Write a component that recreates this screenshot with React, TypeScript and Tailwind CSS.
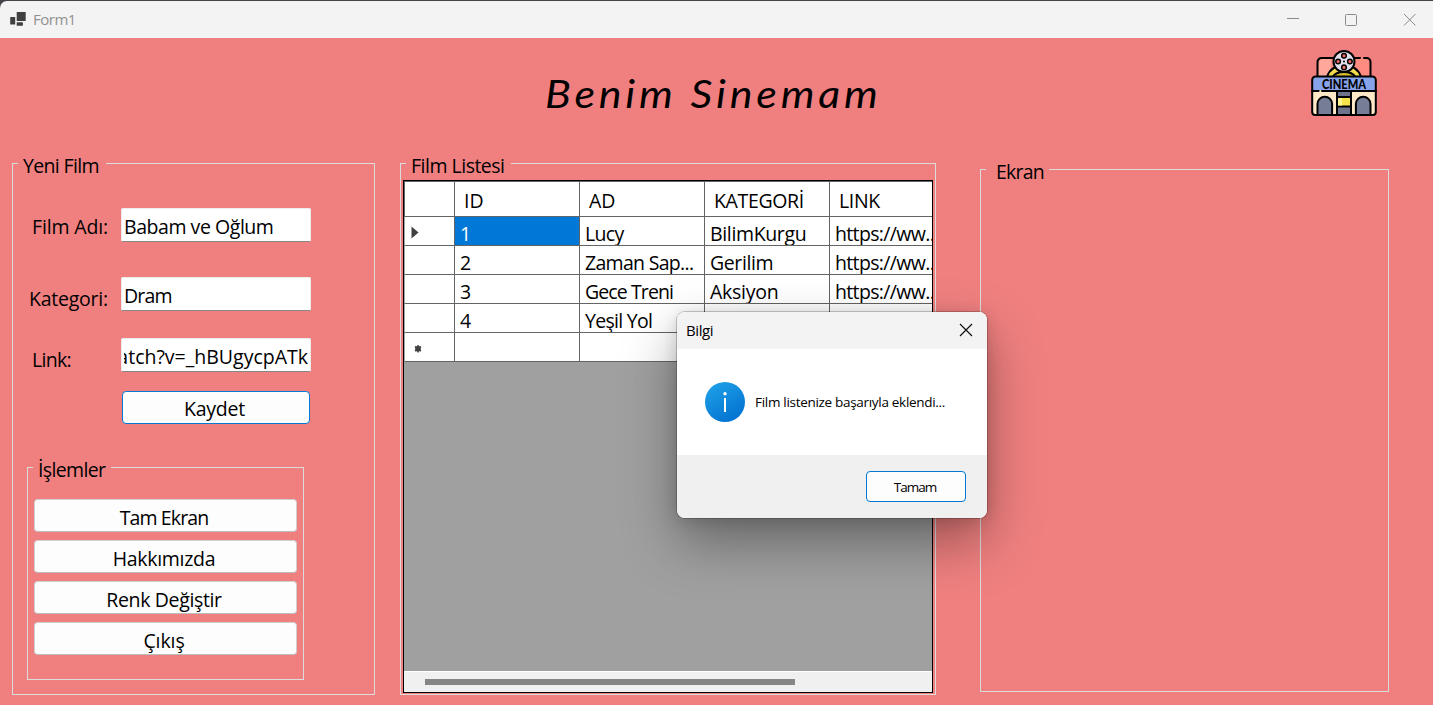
import type { ReactNode } from "react";

function FormIcon() {
  return (
    <svg className="ml-[10px] mt-[10px] h-4 w-4 shrink-0" viewBox="0 0 16 16">
      <g fill="#404040">
        <rect x="6.7" y="1" width="9" height="9" rx="0.6" />
        <rect x="0.2" y="6" width="5" height="7.6" rx="0.4" />
        <rect x="6.7" y="11.2" width="6.2" height="3.6" rx="0.4" />
      </g>
    </svg>
  );
}

function CinemaLogo() {
  return (
    <svg className="mt-[12px] ml-[432px] h-[67px] w-[66px] shrink-0" viewBox="0 0 66 67">
      <g stroke="#000" strokeWidth="2" strokeLinejoin="round" strokeLinecap="round">
        <path d="M6.500 27V11.500a3.500 3.500 0 0 1 3.500-3.500H56a3.500 3.500 0 0 1 3.500 3.500V27Z" fill="#ff8c80" stroke="none" />
        <path d="M7.500 27V13a4 4 0 0 1 4-4H20V27Z" fill="#ffa79b" stroke="none" />
        <path d="M6.500 27V12a4 4 0 0 1 4-4H49M53 8H55.500a4 4 0 0 1 4 4V27" fill="none" />
        <path d="M16 27C18.500 19 25 15.500 33 15.500S47.500 19 50 27Z" fill="#f2dc4e" />
        <path d="M21.500 27C24 23 28 22 33 22S42 23 44.500 27Z" fill="#d7bd28" />
        <circle cx="33" cy="11.500" r="10.500" fill="#dfe0ea" />
        <g fill="#f46c62" strokeWidth="1.500">
          <circle cx="33" cy="5.700" r="2.300" />
          <circle cx="33" cy="17.400" r="2.300" />
          <circle cx="27.100" cy="11.500" r="2.300" />
          <circle cx="38.900" cy="11.500" r="2.300" />
        </g>
        <circle cx="33" cy="11.500" r="1" fill="#000" stroke="none" />
        <path d="M1.200 41H64.800V62a3 3 0 0 1-3 3H4.200a3 3 0 0 1-3-3Z" fill="#ffe8c8" />
        <path d="M26 41H40V65H26Z" fill="#6d748c" />
        <path d="M26 47H40V56.500H26Z" fill="#f6e54a" />
        <path d="M27.200 48.200H31V55.500H27.200Z" fill="#fff591" stroke="none" />
        <path d="M6.500 65V54a7.300 7.300 0 0 1 14.600 0V65Z" fill="#767e97" />
        <path d="M44.900 65V54a7.300 7.300 0 0 1 14.600 0V65Z" fill="#767e97" />
        <path d="M1.200 41V30a3.500 3.500 0 0 1 3.500-3.500H61.300a3.500 3.500 0 0 1 3.500 3.500V41Z" fill="#87a3ea" />
        <path d="M9.300 41V43.500" stroke="#ffe8c8" />
      </g>
      <text
        x="11"
        y="38.500"
        textLength="44"
        lengthAdjust="spacingAndGlyphs"
        className="font-['Lato'] text-[12.500px] font-black"
      >
        CINEMA
      </text>
    </svg>
  );
}

function Group({
  title,
  className,
  legendClass,
  children,
}: {
  title: string;
  className: string;
  legendClass: string;
  children?: ReactNode;
}) {
  return (
    <fieldset className={`min-w-0 shrink-0 border border-[#dcdcdc] ${className}`}>
      <legend className={`ml-[5px] h-[29px] pt-[3px] whitespace-nowrap ${legendClass}`}>{title}</legend>
      {children}
    </fieldset>
  );
}

function Field({
  label,
  value,
  className,
  labelClass,
  valueClass = "",
}: {
  label: string;
  value: string;
  className: string;
  labelClass: string;
  valueClass?: string;
}) {
  return (
    <div className={`flex h-[34px] ${className}`}>
      <div className={`w-[108px] shrink-0 whitespace-nowrap ${labelClass}`}>{label}</div>
      <div
        className={`flex h-[34px] w-[190px] overflow-hidden rounded-[2px] border border-[#ececec] border-b-[#868686] bg-white px-[2px] pt-[4px] whitespace-nowrap ${valueClass}`}
      >
        <div className="flex w-full overflow-hidden [justify-content:inherit]">
          <span className="shrink-0">{value}</span>
        </div>
      </div>
    </div>
  );
}

const actions = [
  { label: "Tam Ekran", tracking: "tracking-[-0.9px]" },
  { label: "Hakkımızda", tracking: "tracking-[-0.3px]" },
  { label: "Renk Değiştir", tracking: "tracking-[-0.35px]" },
  { label: "Çıkış", tracking: "tracking-[-0.1px]" },
];

const headers = [
  { label: "ID", tracking: "" },
  { label: "AD", tracking: "" },
  { label: "KATEGORİ", tracking: "tracking-[-0.35px]" },
  { label: "LINK", tracking: "tracking-[-0.35px]" },
];

const url = { text: "https://ww...", tracking: "tracking-[-0.65px]" };

const rows = [
  [
    { text: "1", tracking: "" },
    { text: "Lucy", tracking: "tracking-[-0.7px]" },
    { text: "BilimKurgu", tracking: "tracking-[-0.35px]" },
    url,
  ],
  [
    { text: "2", tracking: "" },
    { text: "Zaman Sap...", tracking: "tracking-[-0.7px]" },
    { text: "Gerilim", tracking: "tracking-[-0.4px]" },
    url,
  ],
  [
    { text: "3", tracking: "" },
    { text: "Gece Treni", tracking: "tracking-[-0.9px]" },
    { text: "Aksiyon", tracking: "tracking-[-0.25px]" },
    url,
  ],
  [
    { text: "4", tracking: "" },
    { text: "Yeşil Yol", tracking: "tracking-[-0.7px]" },
    { text: "", tracking: "" },
    { text: "", tracking: "" },
  ],
  [
    { text: "", tracking: "" },
    { text: "", tracking: "" },
    { text: "", tracking: "" },
    { text: "", tracking: "" },
  ],
];

function FilmGrid() {
  return (
    <div className="mt-[2px] ml-[2px] flex h-[513px] w-[530px] flex-col overflow-hidden border border-black bg-[#a0a0a0]">
      <div className="flex h-[36px] shrink-0 border-t border-b border-l border-[#646464] bg-white">
        <div className="w-[50px] shrink-0 border-r border-[#646464]" />
        {headers.map((h) => (
          <div key={h.label} className={`w-[125px] shrink-0 border-r border-[#646464] pt-[5px] pl-[9px] ${h.tracking}`}>
            {h.label}
          </div>
        ))}
      </div>
      {rows.map((row, r) => (
        <div key={r} className="flex h-[29px] shrink-0 border-b border-l border-b-[#646464] border-l-[#a0a0a0] bg-white">
          <div className="w-[50px] shrink-0 border-r border-[#646464]">
            {r === 0 && (
              <svg className="mt-[9px] ml-[6px] h-[13px] w-[8px]" viewBox="0 0 8 13">
                <path d="M0.500 0.500L7.500 6.500L0.500 12.500Z" fill="#404040" />
              </svg>
            )}
            {r === 4 && (
              <svg className="mt-[11px] ml-[8px] h-[9px] w-[9px]" viewBox="0 0 9 9">
                <path d="M5 1V8.500M2 2.500L8 7M8 2.500L2 7" stroke="#505050" strokeWidth="1.600" />
                <circle cx="5" cy="4.800" r="2.800" fill="#404040" />
              </svg>
            )}
          </div>
          {row.map((cell, c) => (
            <div
              key={c}
              className={`h-[28px] w-[125px] shrink-0 overflow-hidden border-r border-[#646464] pt-[5px] pl-[5px] leading-[23px] whitespace-nowrap ${
                cell.tracking
              } ${r === 0 && c === 0 ? "bg-[#0078d7] text-white" : ""}`}
            >
              {cell.text}
            </div>
          ))}
        </div>
      ))}
      <div className="mt-auto h-[21px] shrink-0 border-t border-white bg-[#f0f0f0] pt-[7px] pl-[21px]">
        <div className="h-[6px] w-[370px] bg-[#858585]" />
      </div>
    </div>
  );
}

function MessageDialog() {
  return (
    <div className="absolute top-[312px] left-[677px] flex h-[206px] w-[310px] flex-col overflow-hidden rounded-[8px] bg-white shadow-[0_0_0_1px_rgba(0,0,0,0.2),0_24px_54px_rgba(0,0,0,0.36),0_2px_16px_rgba(0,0,0,0.14)]">
      <div className="flex h-[37px] shrink-0 justify-between bg-[#f3f3f3]">
        <span className="pt-[8px] pl-[9px] text-[15px] leading-[20px] tracking-[-0.4px]">Bilgi</span>
        <svg className="mt-[11px] mr-[14px] h-[14px] w-[14px]" viewBox="0 0 14 14">
          <path d="M1 1L13 13M13 1L1 13" stroke="#111" strokeWidth="1.200" />
        </svg>
      </div>
      <div className="flex h-[106px] shrink-0 pt-[33px] pl-[28px]">
        <svg className="h-[40px] w-[40px] shrink-0" viewBox="0 0 40 40">
          <defs>
            <linearGradient id="info" x1="0.200" y1="0" x2="0.800" y2="1">
              <stop offset="0" stopColor="#1fa0e6" />
              <stop offset="1" stopColor="#0070d0" />
            </linearGradient>
          </defs>
          <circle cx="20" cy="20" r="20" fill="url(#info)" />
          <circle cx="20" cy="11.800" r="1.700" fill="#fff" />
          <rect x="19" y="16" width="2" height="14" fill="#fff" />
        </svg>
        <span className="pt-[10px] pl-[10px] text-[13.500px] leading-[20px] tracking-[-0.3px] whitespace-nowrap">
          Film listenize başarıyla eklendi...
        </span>
      </div>
      <div className="flex grow justify-end bg-[#f0f0f0] pt-[16px] pr-[21px]">
        <button className="h-[31px] w-[100px] rounded-[4px] border border-[#0078d4] bg-[#fdfdfd] pt-[1px] pr-[2px] text-[13.500px] leading-[20px] tracking-[-1px]">
          Tamam
        </button>
      </div>
    </div>
  );
}

export default function App() {
  return (
    <div className="relative flex h-[705px] w-[1433px] flex-col overflow-hidden bg-[#f08080] font-['Open_Sans','Noto_Sans',sans-serif] text-[19.500px] leading-[27px] text-black">
      <div className="h-[38px] shrink-0 bg-[#454347] pt-px">
        <div className="flex h-[37px] rounded-tl-[7px] bg-[#f3f3f3]">
          <FormIcon />
          <span className="mt-[8px] ml-[7px] text-[15px] leading-[20px] tracking-[-0.5px] text-[#919191]">Form1</span>
          <svg className="mt-[11px] mr-[17px] ml-auto h-[14px] w-[130px]" viewBox="0 0 130 14" fill="none" stroke="#8b8b8b">
            <path d="M1 6.500H13" />
            <rect x="59.500" y="2.500" width="11" height="11" rx="1" />
            <path d="M118 2L129.500 13.500M129.500 2L118 13.500" />
          </svg>
        </div>
      </div>
      <header className="flex h-[111px] shrink-0">
        <h1 className="mt-[30px] ml-[545px] w-[334px] shrink-0 origin-left scale-x-110 font-['Segoe_Script','Lato',cursive] text-[39px] leading-[50px] tracking-[3.500px] whitespace-nowrap italic">
          Benim Sinemam
        </h1>
        <CinemaLogo />
      </header>
      <main className="flex items-start">
        <Group title="Yeni Film" className="ml-[12px] h-[546px] w-[363px]" legendClass="w-[88px] pl-[5px] tracking-[-0.65px]">
          <div className="flex flex-col pt-[30px]">
            <Field
              label="Film Adı:"
              value="Babam ve Oğlum"
              className="mb-[35px]"
              labelClass="pl-[19px] pt-[5px] tracking-[-0.15px]"
              valueClass="tracking-[-0.45px]"
            />
            <Field
              label="Kategori:"
              value="Dram"
              className="mb-[27px]"
              labelClass="pl-[16px] pt-[8px] tracking-[-0.25px]"
              valueClass="tracking-[-0.8px]"
            />
            <Field
              label="Link:"
              value="watch?v=_hBUgycpATk"
              className="mb-[19px]"
              labelClass="pl-[19px] pt-[8px] tracking-[-0.7px]"
              valueClass="justify-end"
            />
            <button className="ml-[109px] h-[33px] w-[188px] rounded-[4px] border border-[#0078d4] bg-[#fdfdfd] pt-[2px] pr-[3px] tracking-[-0.2px]">
              Kaydet
            </button>
            <Group
              title="İşlemler"
              className="mt-[29px] ml-[14px] h-[227px] w-[277px]"
              legendClass="w-[78px] pl-[5px] tracking-[-0.65px]"
            >
              <div className="flex flex-col gap-[8px] pt-[17px] pl-[6px]">
                {actions.map((a) => (
                  <button
                    key={a.label}
                    className={`h-[33px] w-[263px] overflow-hidden rounded-[4px] border border-[#d0d0d0] border-b-[#bcbcbc] bg-[#fdfdfd] pt-[4px] pr-[3px] ${a.tracking}`}
                  >
                    {a.label}
                  </button>
                ))}
              </div>
            </Group>
          </div>
        </Group>
        <Group title="Film Listesi" className="ml-[25px] h-[546px] w-[536px]" legendClass="w-[105px] pl-[5px] tracking-[-0.5px]">
          <FilmGrid />
        </Group>
        <Group title="Ekran" className="mt-[6px] ml-[44px] h-[537px] w-[409px]" legendClass="w-[63px] pl-[10px] tracking-[-0.8px]" />
      </main>
      <MessageDialog />
    </div>
  );
}
